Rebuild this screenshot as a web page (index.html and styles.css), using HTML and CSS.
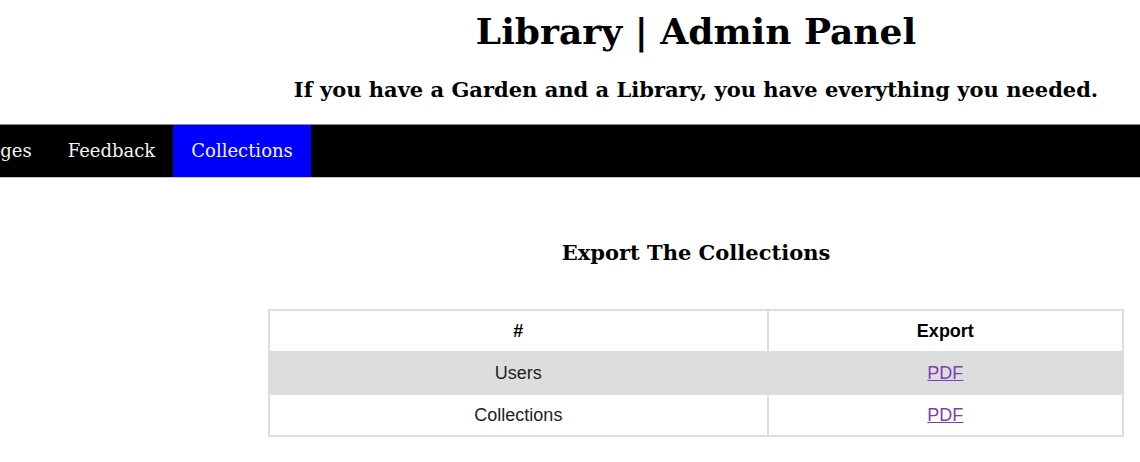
FILE: index.html
```html
<!DOCTYPE html>
<html lang="en">
<head>
<meta charset="utf-8">
<title>Library | Admin Panel</title>
<link rel="stylesheet" href="styles.css">
</head>
<body>
<header class="site-header">
  <h1 class="site-title">Library | Admin Panel</h1>
  <h3 class="site-tagline">If you have a Garden and a Library, you have everything you needed.</h3>
</header>
<nav class="topnav">
  <ul class="topnav-list">
    <li><a class="topnav-link" href="#">Messages</a></li>
    <li><a class="topnav-link" href="#">Feedback</a></li>
    <li><a class="topnav-link active" href="#">Collections</a></li>
  </ul>
</nav>
<main class="content">
  <h3 class="section-title">Export The Collections</h3>
  <table class="export-table">
    <thead>
      <tr><th>#</th><th>Export</th></tr>
    </thead>
    <tbody>
      <tr class="row-alt"><td>Users</td><td><a class="pdf-link" href="#">PDF</a></td></tr>
      <tr><td>Collections</td><td><a class="pdf-link" href="#">PDF</a></td></tr>
    </tbody>
  </table>
</main>
</body>
</html>
```
FILE: styles.css
```css
html, body {
  margin: 0;
  padding: 0;
  background: #fff;
}
body {
  font-family: "DejaVu Serif", serif;
  color: #000;
  overflow: hidden;
}
.site-header {
  padding: 8px 0 0 252px;
  text-align: center;
}
.site-title {
  font-size: 36px;
  font-weight: bold;
  margin: 0;
  line-height: 46px;
}
.site-tagline {
  font-size: 21px;
  font-weight: bold;
  margin: 24px 0 22px;
  line-height: 24px;
}
.topnav {
  background: #000;
  border-top: 1px solid #8a8a8a;
  border-bottom: 1px solid #c8c8c8;
  overflow: hidden;
}
.topnav-list {
  list-style: none;
  margin: 0 0 0 -76px;
  padding: 0;
  display: flex;
}
.topnav-link {
  display: block;
  padding: 0 18px;
  line-height: 52px;
  font-size: 18px;
  color: #f2f2f2;
  text-decoration: none;
}
.topnav-link.active {
  background: #0000ff;
}
.content {
  padding: 0 16px 0 268px;
}
.section-title {
  font-size: 21px;
  font-weight: bold;
  text-align: center;
  margin: 63px 0 44px;
  line-height: 24px;
}
.export-table {
  width: 100%;
  border: 1px solid #dddddd;
  border-spacing: 0;
  font-family: "Liberation Sans", Arial, sans-serif;
  font-size: 18px;
  color: #222;
}
.export-table th,
.export-table td {
  border: 1px solid #dddddd;
  padding: 9px 8px;
  line-height: 22px;
  text-align: center;
  width: 50%;
}
.export-table th {
  color: #000;
  font-weight: bold;
}
.export-table th:first-child,
.export-table td:first-child {
  width: 58.4%;
}
.row-alt {
  background: #dddddd;
}
.pdf-link {
  color: #7b3fb0;
}
```
